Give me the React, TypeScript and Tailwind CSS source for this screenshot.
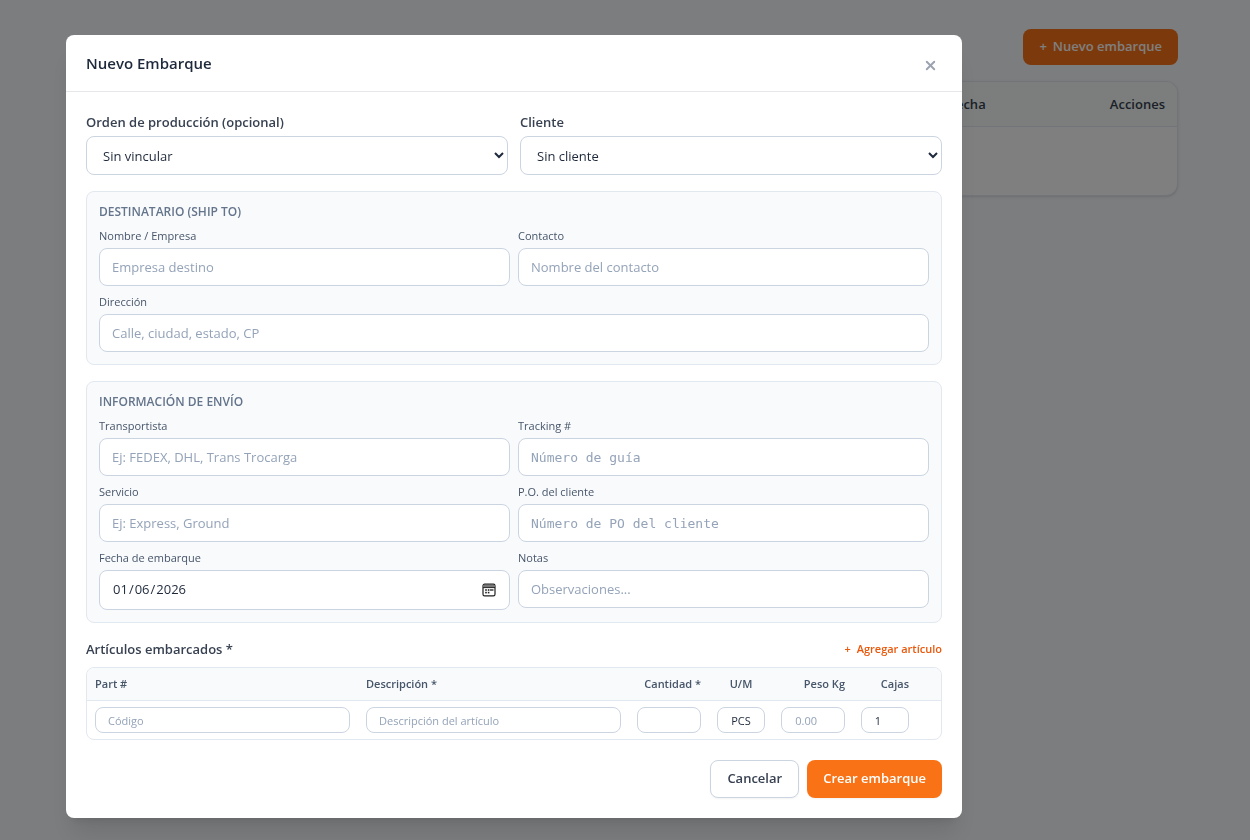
import { useState } from "react";
import type { InputHTMLAttributes, ReactNode } from "react";
import { X } from "lucide-react";

const inputClass =
  "block w-full rounded-lg border border-[#cbd5e1] bg-white px-3 text-[13px] text-[#1e293b] placeholder:text-[#94a3b8]";
const cellInputClass =
  "block h-[26px] w-full rounded-lg border border-[#cbd5e1] bg-white px-3 text-[11px] text-[#1e293b] placeholder:text-[#94a3b8]";

interface FieldProps extends InputHTMLAttributes<HTMLInputElement> {
  id: string;
  label: string;
  wide?: boolean;
  mono?: boolean;
}

function Field({ id, label, wide, mono, ...props }: FieldProps) {
  return (
    <div className={wide ? "col-span-2" : ""}>
      <label htmlFor={id} className="mb-1 block text-[11px] leading-4 text-[#475569]">
        {label}
      </label>
      <input
        id={id}
        name={id}
        className={`${inputClass} h-[38px] ${mono ? "font-['DejaVu_Sans_Mono',monospace]" : ""}`}
        {...props}
      />
    </div>
  );
}

function CalendarIcon() {
  return (
    <svg
      className="pointer-events-none absolute top-[13px] right-[14px] h-[14px] w-[14px]"
      viewBox="0 0 14 14"
      fill="none"
      aria-hidden="true"
    >
      <rect x="1" y="1.2" width="12" height="11.6" rx="1.6" stroke="#1f1f1f" strokeWidth="1.2" />
      <path d="M1.4 2h11.2v2.2H1.4z" fill="#777" />
      <path d="M1 4.6h12" stroke="#1f1f1f" strokeWidth="1" />
      <g fill="#1f1f1f">
        <rect x="5.8" y="6.2" width="1.6" height="1.6" />
        <rect x="8.2" y="6.2" width="1.6" height="1.6" />
        <rect x="10.2" y="6.2" width="1.2" height="1.6" />
        <rect x="3.2" y="6.2" width="1.6" height="1.6" />
        <rect x="3.2" y="8.8" width="1.6" height="1.6" />
        <rect x="5.8" y="8.8" width="1.6" height="1.6" />
      </g>
    </svg>
  );
}

function DateField({ id, label, value, onChange }: {
  id: string;
  label: string;
  value: string;
  onChange: (value: string) => void;
}) {
  return (
    <div>
      <label htmlFor={id} className="mb-1 block text-[11px] leading-4 text-[#475569]">
        {label}
      </label>
      <div className="relative">
        <input
          id={id}
          name={id}
          type="date"
          value={value}
          onChange={(e) => onChange(e.target.value)}
          className={`${inputClass} h-10 [&::-webkit-calendar-picker-indicator]:opacity-0`}
        />
        <CalendarIcon />
      </div>
    </div>
  );
}

function Section({ title, children }: { title: string; children: ReactNode }) {
  return (
    <section className="rounded-lg border border-[#e2e8f0] bg-[#f8fafc] p-3">
      <h3 className="mb-2 text-xs font-semibold text-[#64748b] uppercase">{title}</h3>
      <div className="grid grid-cols-2 gap-2">{children}</div>
    </section>
  );
}

function SelectField({ id, label, option }: { id: string; label: string; option: string }) {
  return (
    <div>
      <label htmlFor={id} className="mb-1 block text-[13px] leading-5 font-semibold text-[#374151]">
        {label}
      </label>
      <select
        id={id}
        name={id}
        className="block h-[39px] w-full rounded-lg border border-[#cbd5e1] bg-white px-3 text-[13px] text-[#1e293b]"
      >
        <option>{option}</option>
      </select>
    </div>
  );
}

// Listado de embarques, queda detrás del modal
function ShipmentList() {
  return (
    <main className="px-[72px] pt-[29px]">
      <div className="mb-4 flex justify-end">
        <button
          type="button"
          className="flex h-9 items-center gap-1.5 rounded-lg bg-[#f97316] px-4 text-[13px] font-semibold text-white"
        >
          <span>+</span>
          <span>Nuevo embarque</span>
        </button>
      </div>
      <div className="overflow-hidden rounded-xl border border-[#e2e8f0] bg-white shadow-sm">
        <table className="w-full table-fixed text-[13px] leading-5">
          <colgroup>
            <col />
            <col className="w-[118px]" />
            <col className="w-[122px]" />
          </colgroup>
          <thead className="border-b border-[#e2e8f0] bg-[#f8fdfa] text-[#374151]">
            <tr>
              <th className="px-3 py-3"></th>
              <th className="px-3 py-3 text-left font-semibold">Fecha</th>
              <th className="px-3 py-3 text-right font-semibold">Acciones</th>
            </tr>
          </thead>
          <tbody>
            <tr>
              <td colSpan={3} className="h-[68px]"></td>
            </tr>
          </tbody>
        </table>
      </div>
    </main>
  );
}

function ItemsTable() {
  return (
    <div className="overflow-hidden rounded-lg border border-[#e2e8f0]">
      <table className="w-full table-fixed text-[11px] leading-4">
        <colgroup>
          <col />
          <col />
          <col className="w-20" />
          <col className="w-16" />
          <col className="w-20" />
          <col className="w-16" />
          <col className="w-6" />
        </colgroup>
        <thead className="border-b border-[#e2e8f0] bg-[#f8fafc] text-[#475569]">
          <tr className="whitespace-nowrap">
            <th className="px-2 py-2 text-left font-semibold">Part #</th>
            <th className="px-2 py-2 text-left font-semibold">Descripción *</th>
            <th className="px-2 py-2 text-right font-semibold">Cantidad *</th>
            <th className="px-2 py-2 text-center font-semibold">U/M</th>
            <th className="px-2 py-2 text-right font-semibold">Peso Kg</th>
            <th className="px-2 py-2 text-right font-semibold">Cajas</th>
            <th></th>
          </tr>
        </thead>
        <tbody>
          <tr>
            <td className="px-2 py-1.5">
              <input aria-label="Part #" placeholder="Código" className={cellInputClass} />
            </td>
            <td className="px-2 py-1.5">
              <input aria-label="Descripción" placeholder="Descripción del artículo" className={cellInputClass} />
            </td>
            <td className="px-2 py-1.5">
              <input type="number" aria-label="Cantidad" className={`${cellInputClass} text-right`} />
            </td>
            <td className="px-2 py-1.5">
              <input aria-label="U/M" defaultValue="PCS" className={`${cellInputClass} text-center`} />
            </td>
            <td className="px-2 py-1.5">
              <input
                type="number"
                aria-label="Peso Kg"
                placeholder="0.00"
                className={`${cellInputClass} text-right`}
              />
            </td>
            <td className="px-2 py-1.5">
              <input type="number" aria-label="Cajas" defaultValue={1} className={`${cellInputClass} text-right`} />
            </td>
            <td></td>
          </tr>
        </tbody>
      </table>
    </div>
  );
}

export default function App() {
  const [fecha, setFecha] = useState("2026-01-06");

  return (
    <div className="min-h-screen bg-[#f8fafc] font-['Open_Sans','Noto_Sans',sans-serif]">
      <ShipmentList />

      <div className="fixed inset-0 overflow-y-auto bg-black/50 pt-[35px] pr-[288px] pb-[22px] pl-[66px]">
        <div
          role="dialog"
          aria-modal="true"
          aria-labelledby="modal-title"
          className="rounded-lg bg-white shadow-xl"
        >
          <div className="flex items-center justify-between border-b border-[#e5e7eb] px-5 py-4">
            <h2 id="modal-title" className="text-[15px] leading-6 font-semibold text-[#1e293b]">
              Nuevo Embarque
            </h2>
            <button type="button" aria-label="Cerrar" className="px-1 pt-1 text-[#9ca3af]">
              <X size={15} strokeWidth={3} />
            </button>
          </div>

          <form className="space-y-4 p-5" onSubmit={(e) => e.preventDefault()}>
            <div className="grid grid-cols-2 gap-3">
              <SelectField id="orden" label="Orden de producción (opcional)" option="Sin vincular" />
              <SelectField id="cliente" label="Cliente" option="Sin cliente" />
            </div>

            <Section title="Destinatario (Ship To)">
              <Field id="nombre" label="Nombre / Empresa" placeholder="Empresa destino" />
              <Field id="contacto" label="Contacto" placeholder="Nombre del contacto" />
              <Field id="direccion" label="Dirección" placeholder="Calle, ciudad, estado, CP" wide />
            </Section>

            <Section title="Información de envío">
              <Field id="transportista" label="Transportista" placeholder="Ej: FEDEX, DHL, Trans Trocarga" />
              <Field id="tracking" label="Tracking #" placeholder="Número de guía" mono />
              <Field id="servicio" label="Servicio" placeholder="Ej: Express, Ground" />
              <Field id="po" label="P.O. del cliente" placeholder="Número de PO del cliente" mono />
              <DateField id="fecha" label="Fecha de embarque" value={fecha} onChange={setFecha} />
              <Field id="notas" label="Notas" placeholder="Observaciones..." />
            </Section>

            <div>
              <div className="mb-2 flex items-center justify-between">
                <h3 className="text-[13px] leading-5 font-semibold text-[#374151]">Artículos embarcados *</h3>
                <button type="button" className="flex gap-1.5 text-[11px] leading-4 font-semibold text-[#ea580c]">
                  <span>+</span>
                  <span>Agregar artículo</span>
                </button>
              </div>
              <ItemsTable />
            </div>

            <div className="flex justify-end gap-2 pt-1">
              <button
                type="button"
                className="h-[38px] rounded-lg border border-[#cbd5e1] bg-white px-4 text-[13px] font-semibold text-[#374151] shadow-xs"
              >
                Cancelar
              </button>
              <button
                type="submit"
                className="h-[38px] rounded-lg bg-[#f97316] px-4 text-[13px] font-semibold text-white shadow-xs"
              >
                Crear embarque
              </button>
            </div>
          </form>
        </div>
      </div>
    </div>
  );
}
